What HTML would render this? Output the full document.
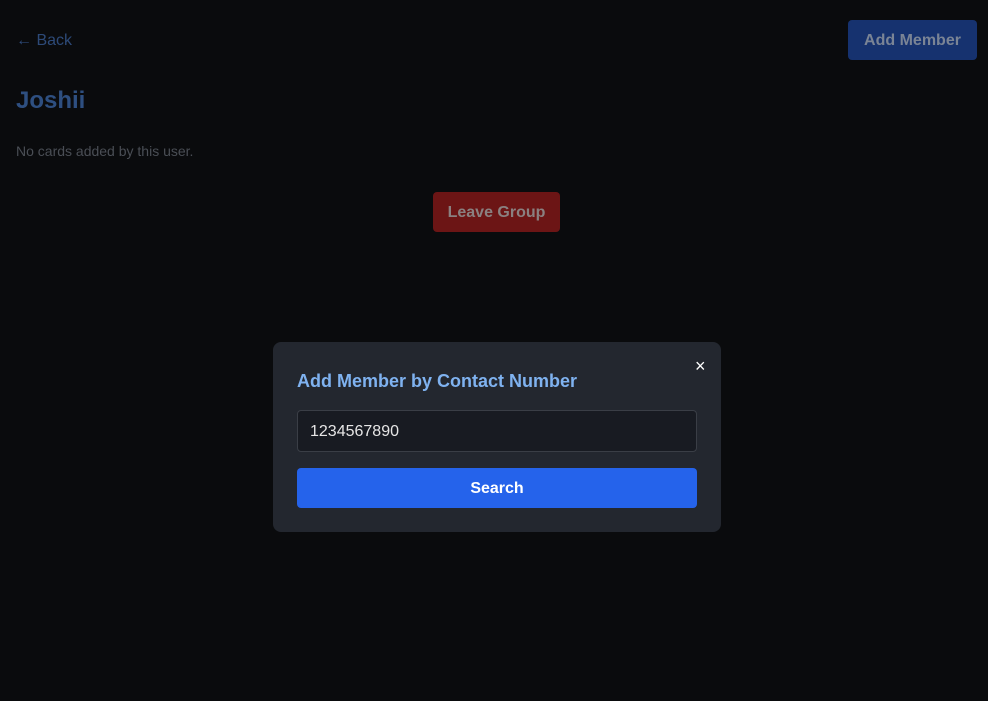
<!DOCTYPE html>
<html><head><style>
body{margin:0;width:988px;height:701px;background:#0a0b0d;font-family:"Liberation Sans","DejaVu Sans",sans-serif;position:relative;overflow:hidden}
.a{position:absolute}
</style></head><body>
<div class="a" style="left:16px;top:32px;font-size:16px;color:#2d4a78">← Back</div>
<div class="a" style="left:848px;top:20px;width:129px;height:40px;background:#16326f;border-radius:4px;color:#7a8495;font-weight:bold;font-size:16px;line-height:42px;text-align:center">Add Member</div>
<div class="a" style="left:16px;top:87px;font-size:24px;font-weight:bold;color:#2e4f80">Joshii</div>
<div class="a" style="left:16px;top:143px;font-size:14px;color:#4a4e55">No cards added by this user.</div>
<div class="a" style="left:433px;top:192px;width:127px;height:40px;background:#6c1515;border-radius:4px;color:#8a8080;font-weight:bold;font-size:16px;line-height:42px;text-align:center">Leave Group</div>
<div class="a" style="left:273px;top:342px;width:448px;height:190px;background:#23272f;border-radius:8px">
<div class="a" style="left:422px;top:14px;color:#fff;font-size:18px">×</div>
<div class="a" style="left:24px;top:29px;font-size:18px;font-weight:bold;color:#7fb2f0">Add Member by Contact Number</div>
<div class="a" style="left:24px;top:68px;width:400px;height:42px;background:#181b22;border:1px solid #3a3e46;border-radius:4px;box-sizing:border-box"></div>
<div class="a" style="left:37px;top:81px;font-size:16px;color:#e6e6e6">1234567890</div>
<div class="a" style="left:24px;top:126px;width:400px;height:40px;background:#2563eb;border-radius:4px;color:#fff;font-weight:bold;font-size:16px;line-height:42px;text-align:center">Search</div>
</div>
</body></html>
